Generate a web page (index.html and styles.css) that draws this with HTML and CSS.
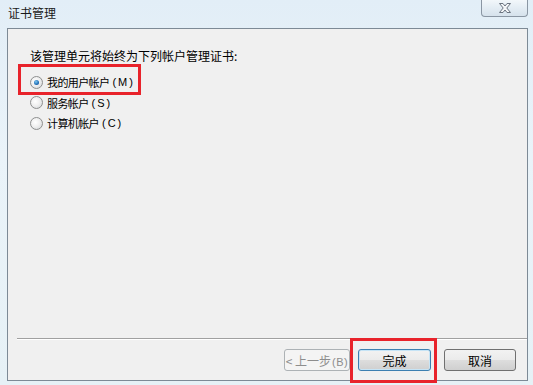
FILE: index.html
```html
<!DOCTYPE html>
<html>
<head>
    <meta charset="UTF-8" />
    <title>证书管理</title>
    <link rel="stylesheet" href="styles.css">
</head>
<body>
    <div class="window">
        <div class="titlebar">
            <span class="title">证书管理</span>
            <div class="close">
                <svg width="16" height="12" viewBox="0 0 16 12">
                    <path d="M2.5 1.5 L6 1.5 L8 4 L10 1.5 L13.5 1.5 L9.8 6 L13.5 10.5 L10 10.5 L8 8 L6 10.5 L2.5 10.5 L6.2 6 Z" fill="#f4f6f8" stroke="#6b7480" stroke-width="1" stroke-linejoin="round"/>
                </svg>
            </div>
        </div>

        <div class="client">
            <div class="content">
                <p class="lead">该管理单元将始终为下列帐户管理证书:</p>
                <label class="option">
                    <span class="radio checked"></span>我的用户帐户<span class="key">(M)</span>
                </label>
                <label class="option">
                    <span class="radio"></span>服务帐户<span class="key">(S)</span>
                </label>
                <label class="option">
                    <span class="radio"></span>计算机帐户<span class="key">(C)</span>
                </label>
            </div>

            <div class="footer">
                <button class="btn disabled">&lt; 上一步<span class="key">(B)</span></button>
                <button class="btn finish">完成</button>
                <button class="btn cancel">取消</button>
            </div>
        </div>

        <!-- red highlight marks -->
        <div class="mark mark-user"></div>
        <div class="mark mark-finish"></div>
    </div>
</body>
</html>
```

FILE: styles.css
```css
body{
    margin:0;
    font-family:"Noto Sans CJK SC","Liberation Sans",sans-serif;
    font-size:12px;
    color:#000;
}
.window{
    position:relative;
    width:533px;
    height:385px;
    box-sizing:border-box;
    padding:0 5px 4px 7px;
    display:flex;
    flex-direction:column;
    background:linear-gradient(180deg,#e2eef7 0%,#eaf3f9 40%,#e6f1f6 100%);
    overflow:hidden;
}
.titlebar{
    height:28px;
    display:flex;
    justify-content:space-between;
    align-items:flex-start;
}
.title{
    margin-top:4px;
    margin-left:1px;
    line-height:18px;
    color:#1a1a1a;
}
.close{
    width:45px;
    height:17px;
    margin-top:-1px;
    border:1px solid #8a96a3;
    border-top:none;
    border-radius:0 0 4px 4px;
    background:linear-gradient(180deg,#f4f8fb 0%,#e4edf4 50%,#d6e2ec 100%);
    display:flex;
    align-items:center;
    justify-content:center;
}
.client{
    flex:1;
    border:1px solid #7d8a96;
    background:#f0f0f0;
    display:flex;
    flex-direction:column;
}
.content{
    flex:1;
    padding:19px 0 0 22px;
}
.lead{
    margin:0 0 8px 0;
    line-height:16px;
}
.option{
    display:flex;
    align-items:center;
    height:20.5px;
    font-size:11px;
    letter-spacing:-0.6px;
}
.key{
    font-size:11px;
    font-family:"Liberation Sans",sans-serif;
    letter-spacing:2px;
    margin-left:3px;
}
.radio{
    width:11px;
    height:11px;
    border:1px solid #8e8f8f;
    border-radius:50%;
    margin-right:4px;
    background:radial-gradient(circle at 40% 40%,#ffffff 0%,#f0f0f0 45%,#cfd3d6 100%);
    box-sizing:content-box;
    display:flex;
    align-items:center;
    justify-content:center;
}
.radio.checked::after{
    content:"";
    width:5px;
    height:5px;
    border-radius:50%;
    background:radial-gradient(circle at 40% 35%,#7fc6ee 0%,#1f6fb8 60%,#173f73 100%);
}
.footer{
    margin-left:9px;
    border-top:1px solid #a0a0a0;
    box-shadow:inset 0 1px 0 #ffffff;
    padding:10px 11px 9px 0;
    display:flex;
    justify-content:flex-end;
}
.btn{
    height:22px;
    box-sizing:border-box;
    border:1px solid #707070;
    border-radius:3px;
    background:linear-gradient(180deg,#f2f2f2 0%,#ebebeb 48%,#dddddd 52%,#cfcfcf 100%);
    font-family:"Noto Sans CJK SC","Liberation Sans",sans-serif;
    font-size:12px;
    color:#000;
    padding:0;
    white-space:nowrap;
}
.btn .key{
    letter-spacing:0.5px;
    margin-left:1px;
}
.btn.disabled{
    width:66px;
    color:#8d8d8d;
    border-color:#adb2b5;
    background:#f4f4f4;
    margin-right:8px;
}
.btn.finish{
    width:73px;
    border-color:#3c7fb1;
    box-shadow:inset 0 0 0 1px #c6e4f6;
}
.btn.cancel{
    width:72px;
    margin-left:13px;
}
.mark{
    position:absolute;
    border:3px solid #e8232b;
    box-sizing:border-box;
}
.mark-user{
    left:18px;
    top:64px;
    width:123px;
    height:31px;
}
.mark-finish{
    left:350px;
    top:338px;
    width:87px;
    height:45px;
}
```
